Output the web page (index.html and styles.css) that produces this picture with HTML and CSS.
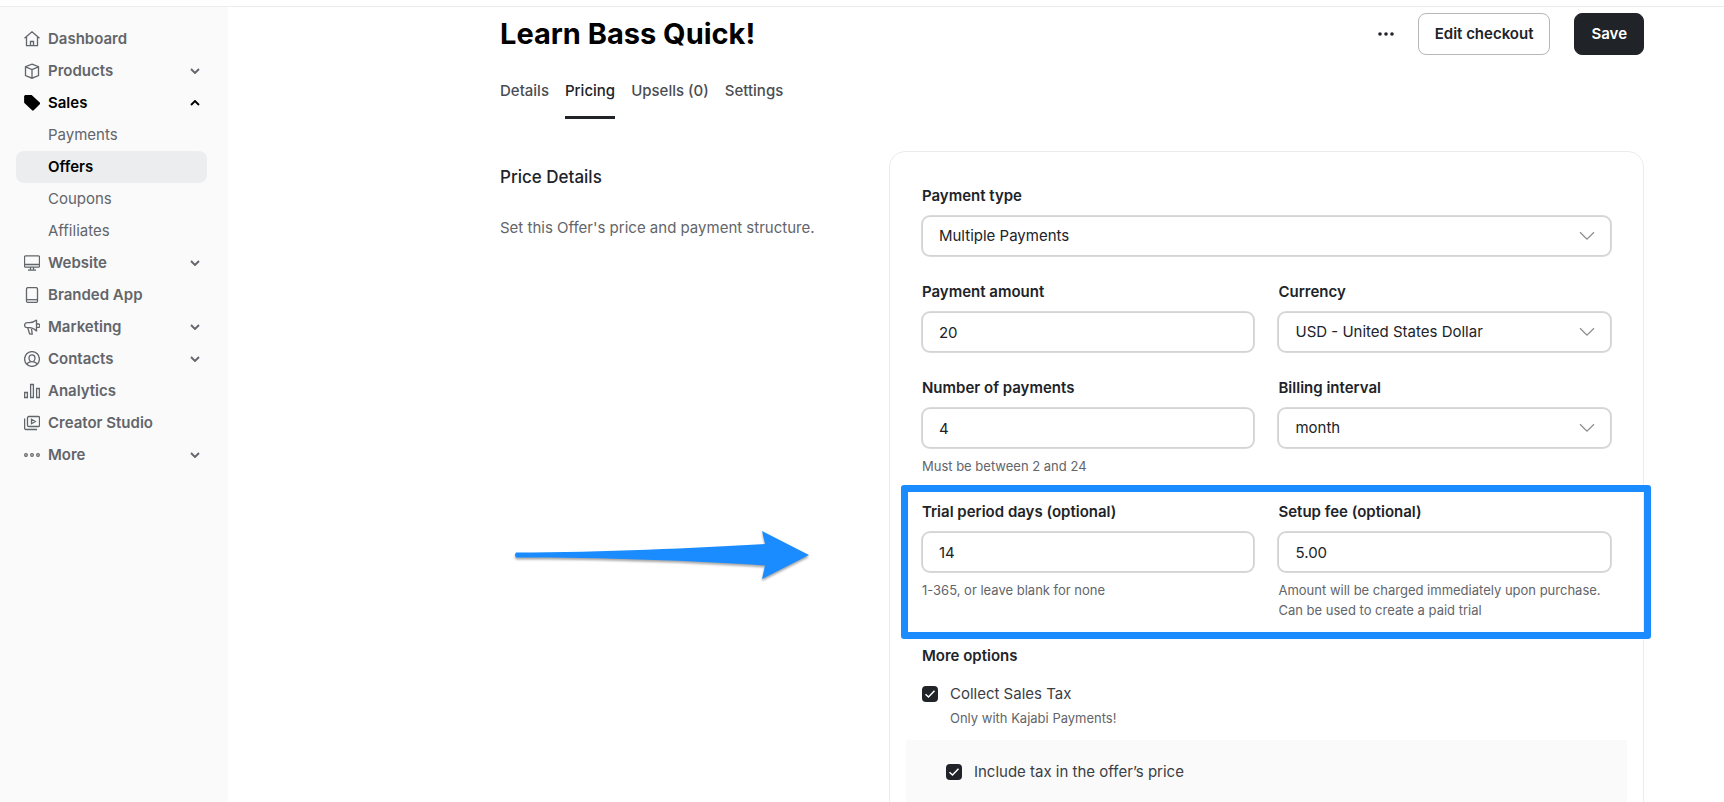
FILE: index.html
```html
<!DOCTYPE html>
<html lang="en">
<head>
<meta charset="utf-8">
<title>Learn Bass Quick! – Pricing</title>
<meta name="viewport" content="width=device-width, initial-scale=1">
<link rel="stylesheet" href="styles.css">
</head>
<body>
<svg class="sprite" aria-hidden="true">
  <symbol id="chev" viewBox="0 0 10 6"><path d="M1 1l4 4 4-4" fill="none" stroke="currentColor" stroke-width="1.9"/></symbol>
  <symbol id="chev-lg" viewBox="0 0 16 10"><path d="M1 1.200l7 7 7-7" fill="none" stroke="currentColor" stroke-width="1.300"/></symbol>
  <symbol id="tick" viewBox="0 0 16 16"><path d="M3.500 8.300l3 2.700 6-6.300" fill="none" stroke="currentColor" stroke-width="1.500"/></symbol>
</svg>
<div class="app">
  <aside class="sidebar">
    <nav class="nav" aria-label="Main">
      <a class="nav-item" href="#"><svg class="icon" viewBox="0 0 16 16"><path d="M.5 7.200L8 .8l7.500 6.400M2.500 5.700v9h11v-9M6.500 14.500v-4h3v4"/></svg><span>Dashboard</span></a>
      <a class="nav-item" href="#"><svg class="icon" viewBox="0 0 16 16"><path d="M8 1.200l6.500 2.500v8.800L8 15.200l-6.500-2.700V3.700zM1.500 3.900L8 6.600l6.500-2.700M8 6.600v8.600"/></svg><span>Products</span><svg class="chev"><use href="#chev"/></svg></a>
      <a class="nav-item current" href="#"><svg class="icon" viewBox="0 0 16 16"><path class="solid" d="M.8 1.300a.6.6 0 0 1 .6-.6h6l7.900 7.200a.6.6 0 0 1 0 .8l-6 6.100a.6.6 0 0 1-.8 0L.8 7.400z"/></svg><span>Sales</span><svg class="chev up"><use href="#chev"/></svg></a>
      <a class="nav-item sub" href="#">Payments</a>
      <a class="nav-item sub active" href="#" aria-current="page">Offers</a>
      <a class="nav-item sub" href="#">Coupons</a>
      <a class="nav-item sub" href="#">Affiliates</a>
      <a class="nav-item" href="#"><svg class="icon" viewBox="0 0 16 16"><path d="M1.500.8h13a1 1 0 0 1 1 1v9.400a1 1 0 0 1-1 1h-13a1 1 0 0 1-1-1V1.800a1 1 0 0 1 1-1zM.5 9.500h15M6.500 12.500v2.500M9.500 12.500v2.500M4 15.200h8"/></svg><span>Website</span><svg class="chev"><use href="#chev"/></svg></a>
      <a class="nav-item" href="#"><svg class="icon" viewBox="0 0 16 16"><rect x="2.500" y=".6" width="11" height="14.800" rx="1.500"/><path d="M2.500 12.700h11"/></svg><span>Branded App</span></a>
      <a class="nav-item" href="#"><svg class="icon" viewBox="0 0 16 16"><path d="M12.500.8v11.800M12.500 1C10.500 2.700 8 3.600 5.500 3.600H3.200A2.700 2.700 0 0 0 .6 6.200c0 1.400 1.200 2.500 2.600 2.500h2.300c2.500 0 5 1.200 7 3.400M12.800 5h1.400a1.200 1.200 0 0 1 0 3.400h-1.400M3.800 8.900l1.600 5.300c.2.700.8 1 1.500.9h1.300L7.500 9.100"/></svg><span>Marketing</span><svg class="chev"><use href="#chev"/></svg></a>
      <a class="nav-item" href="#"><svg class="icon" viewBox="0 0 16 16"><circle cx="8" cy="8" r="7.400"/><path d="M8 3.800c1.900 0 3 1.300 3 3.200S9.700 10.800 8 10.800 5 8.900 5 7s1.100-3.200 3-3.200zM3 13.200c.5-1.700 1.700-2 3.300-2.300v-.8M13 13.200c-.5-1.700-1.700-2-3.300-2.300v-.8"/></svg><span>Contacts</span><svg class="chev"><use href="#chev"/></svg></a>
      <a class="nav-item" href="#"><svg class="icon" viewBox="0 0 16 16"><path d="M.6 9.500h2.800v5H.6zM6.600 1.500h2.800v13H6.600zM12.600 5.500h2.800v9h-2.800z"/></svg><span>Analytics</span></a>
      <a class="nav-item" href="#"><svg class="icon" viewBox="0 0 16 16"><rect x="3.500" y="1.500" width="12" height="10" rx="1.300"/><path d="M.6 3.500v9.700a1.300 1.300 0 0 0 1.300 1.300H13M7.500 4.300v4.400l3.800-2.200z"/></svg><span>Creator Studio</span></a>
      <a class="nav-item" href="#"><svg class="icon" viewBox="0 0 16 16"><circle cx="2" cy="8" r="1.300"/><circle cx="8" cy="8" r="1.300"/><circle cx="14" cy="8" r="1.300"/></svg><span>More</span><svg class="chev"><use href="#chev"/></svg></a>
    </nav>
  </aside>

  <main class="main">
    <header class="header">
      <h1 class="title">Learn Bass Quick!</h1>
      <div class="actions">
        <button class="more-btn" type="button" aria-label="More actions"><svg viewBox="0 0 16 4"><circle cx="2" cy="2" r="1.800"/><circle cx="8" cy="2" r="1.800"/><circle cx="14" cy="2" r="1.800"/></svg></button>
        <button class="btn" type="button">Edit checkout</button>
        <button class="btn primary" type="button">Save</button>
      </div>
    </header>
    <nav class="tabs" aria-label="Offer">
      <a class="tab" href="#">Details</a>
      <a class="tab selected" href="#" aria-current="page">Pricing</a>
      <a class="tab" href="#">Upsells (0)</a>
      <a class="tab" href="#">Settings</a>
    </nav>

    <div class="section">
      <div class="intro">
        <h2 class="intro-title">Price Details</h2>
        <p class="intro-text">Set this Offer's price and payment structure.</p>
        <svg class="arrow" viewBox="0 0 300 60" aria-hidden="true"><path d="M2 24.500 C90 24.500 180 20 251 16 L248 3 L295 27 L248 51 L251 37.500 C180 32.500 90 29.500 2 29.500 Q0 27 2 24.500z"/></svg>
      </div>

      <form class="card">
        <div class="field">
          <label for="type">Payment type</label>
          <div class="select"><select id="type"><option>Multiple Payments</option></select><svg><use href="#chev-lg"/></svg></div>
        </div>
        <div class="pair">
          <div class="field">
            <label for="amount">Payment amount</label>
            <input class="input" id="amount" type="text" value="20">
          </div>
          <div class="field">
            <label for="currency">Currency</label>
            <div class="select"><select id="currency"><option>USD - United States Dollar</option></select><svg><use href="#chev-lg"/></svg></div>
          </div>
        </div>
        <div class="pair">
          <div class="field">
            <label for="count">Number of payments</label>
            <input class="input" id="count" type="text" value="4">
            <p class="hint">Must be between 2 and 24</p>
          </div>
          <div class="field">
            <label for="interval">Billing interval</label>
            <div class="select"><select id="interval"><option>month</option></select><svg><use href="#chev-lg"/></svg></div>
          </div>
        </div>
        <div class="pair highlighted">
          <div class="field">
            <label for="trial">Trial period days (optional)</label>
            <input class="input" id="trial" type="text" value="14">
            <p class="hint">1-365, or leave blank for none</p>
          </div>
          <div class="field">
            <label for="fee">Setup fee (optional)</label>
            <input class="input" id="fee" type="text" value="5.00">
            <p class="hint">Amount will be charged immediately upon purchase. Can be used to create a paid trial</p>
          </div>
        </div>
        <div class="options">
          <h3 class="options-title">More options</h3>
          <div class="check">
            <span class="box"><input id="tax" type="checkbox" checked><svg><use href="#tick"/></svg></span>
            <label for="tax">Collect Sales Tax</label>
          </div>
          <p class="check-hint">Only with Kajabi Payments!</p>
          <div class="suboptions">
            <div class="check">
              <span class="box"><input id="include" type="checkbox" checked><svg><use href="#tick"/></svg></span>
              <label for="include">Include tax in the offer’s price</label>
            </div>
          </div>
        </div>
      </form>
    </div>
  </main>
</div>
</body>
</html>
```
FILE: styles.css
```css
*, *::before, *::after { box-sizing: border-box; }

body {
  margin: 0;
  padding-top: 6px;
  height: 100vh;
  overflow: hidden;
  background: #fff;
  color: #202328;
  font: 400 15px/24px Inter, "Liberation Sans", sans-serif;
}

h1, h2, h3, p { margin: 0; }
a { color: inherit; text-decoration: none; }
button, input, select { font: inherit; color: inherit; }
.sprite { position: absolute; width: 0; height: 0; }

.app {
  display: flex;
  height: 100%;
  border-top: 1px solid #ececee;
}

/* Sidebar */
.sidebar {
  flex: 0 0 228px;
  padding: 16px 21px 16px 16px;
  background: #fafafa;
}
.nav { display: flex; flex-direction: column; }
.nav-item {
  display: flex;
  align-items: center;
  gap: 8px;
  height: 32px;
  padding: 0 7px 0 8px;
  border-radius: 8px;
  color: #62656a;
  font-weight: 600;
}
.nav-item.sub { padding-left: 32px; font-weight: 400; }
.nav-item.current { color: #000; }
.nav-item.active { background: #ecedef; color: #000; font-weight: 600; }
.icon {
  width: 16px;
  height: 16px;
  fill: none;
  stroke: currentColor;
  stroke-width: 1.3;
}
.icon .solid { fill: currentColor; }
.chev { width: 10px; height: 6px; margin-left: auto; }
.chev.up { transform: rotate(180deg); }

/* Main */
.main {
  flex: 1;
  min-width: 0;
  padding: 6px 80px 0 272px;
}
.header {
  display: flex;
  align-items: center;
  justify-content: space-between;
}
.title { font-size: 29px; line-height: 40px; font-weight: 700; color: #000; }
.actions { display: flex; align-items: center; gap: 24px; }
.more-btn {
  display: flex;
  padding: 0;
  border: 0;
  background: none;
}
.more-btn svg { width: 16px; height: 4px; fill: #202328; }
.btn {
  height: 42px;
  padding: 0 16px;
  border: 1px solid #b5b7ba;
  border-radius: 8px;
  background: #fff;
  font-weight: 600;
}
.btn.primary { background: #202328; border-color: #202328; color: #fff; }

.tabs { display: flex; gap: 16px; margin-top: 24px; }
.tab {
  padding-bottom: 13px;
  border-bottom: 3px solid transparent;
  color: #4a4d52;
  font-weight: 500;
}
.tab.selected { border-color: #202328; color: #202328; }

.section {
  display: grid;
  grid-template-columns: 34% 66%;
  margin-top: 32px;
}
.intro { position: relative; padding-top: 14px; }
.intro-title { font-size: 17px; line-height: 24px; font-weight: 500; }
.intro-text { margin-top: 27px; color: #62656a; }

/* Annotation arrow pointing at the highlighted fields */
.arrow {
  position: absolute;
  left: 14px;
  top: 377px;
  width: 300px;
  height: 60px;
  fill: #1a8cff;
  filter: drop-shadow(0 2px 1px rgba(0, 0, 0, .35));
}

.card {
  display: flex;
  flex-direction: column;
  gap: 24px;
  padding: 32px;
  border: 1px solid #ececee;
  border-radius: 16px;
}
.pair {
  display: grid;
  grid-template-columns: 1fr 1fr;
  gap: 24px;
}
.field { display: flex; flex-direction: column; gap: 8px; min-width: 0; }
.field label { font-weight: 600; }
.input, .select select {
  width: 100%;
  height: 40px;
  padding: 0 16px;
  border: 1px solid #d2d3d4;
  border-radius: 8px;
  box-shadow: 0 0 0 1px #d9dadb;
  background: #fff;
}
.select { display: grid; align-items: center; }
.select select { appearance: none; grid-area: 1 / 1; }
.select svg {
  grid-area: 1 / 1;
  justify-self: end;
  width: 16px;
  height: 10px;
  margin-right: 16px;
  color: #8b8e92;
  pointer-events: none;
}
.hint, .check-hint { font-size: 13px; line-height: 20px; color: #62656a; }

.highlighted { position: relative; }
.highlighted::after {
  content: "";
  position: absolute;
  inset: -15px -40px -19px -21px;
  border: 7px solid #1a8cff;
  border-radius: 3px;
  pointer-events: none;
}

.options-title { font-size: 15px; line-height: 24px; font-weight: 600; }
.check {
  display: flex;
  align-items: center;
  gap: 12px;
  color: #3b3e44;
}
.options > .check { margin-top: 14px; }
.box { display: grid; }
.box input {
  grid-area: 1 / 1;
  appearance: none;
  width: 16px;
  height: 16px;
  margin: 0;
  border-radius: 4px;
  background: #202328;
}
.box svg {
  grid-area: 1 / 1;
  width: 16px;
  height: 16px;
  color: #fff;
  pointer-events: none;
}
.check-hint { margin: 2px 0 0 28px; }
.suboptions {
  margin: 12px -16px 0;
  padding: 20px 40px;
  background: #fafafa;
}
```
